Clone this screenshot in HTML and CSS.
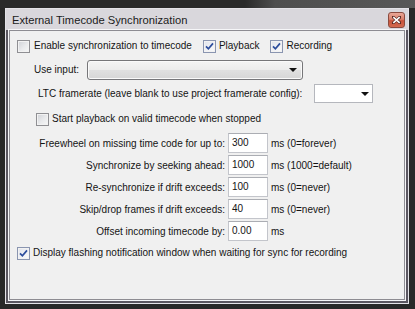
FILE: index.html
```html
<!DOCTYPE html>
<html>
<head>
<meta charset="utf-8">
<link rel="stylesheet" href="styles.css">
</head>
<body>
<div class="window">
  <div class="titlebar">
    <span class="title">External Timecode Synchronization</span>
    <span class="close"><svg width="9" height="8" viewBox="0 0 9 8"><path d="M1 1 L8 7 M8 1 L1 7" stroke="#5a2a22" stroke-width="3" stroke-linecap="square"/><path d="M1.3 1.2 L7.7 6.8 M7.7 1.2 L1.3 6.8" stroke="#fff" stroke-width="1.6"/></svg></span>
  </div>
  <div class="frame">
    <div class="client">
      <div class="row r1">
        <label class="cb"><span class="box"></span>Enable synchronization to timecode</label>
        <label class="cb"><span class="box checked"><svg width="11" height="11" viewBox="0 0 11 11"><path d="M2 5.3 L4.4 7.8 L9 2.4" fill="none" stroke="#2c4d9c" stroke-width="1.7"/></svg></span>Playback</label>
        <label class="cb"><span class="box checked"><svg width="11" height="11" viewBox="0 0 11 11"><path d="M2 5.3 L4.4 7.8 L9 2.4" fill="none" stroke="#2c4d9c" stroke-width="1.7"/></svg></span>Recording</label>
      </div>
      <div class="row r2">
        <span class="lbl">Use input:</span>
        <div class="combo"><span class="arrow"></span></div>
      </div>
      <div class="row r3">
        <span class="lbl">LTC framerate (leave blank to use project framerate config):</span>
        <div class="combo edit"><span class="arrow"></span></div>
      </div>
      <div class="row r4">
        <label class="cb"><span class="box"></span>Start playback on valid timecode when stopped</label>
      </div>
      <div class="grid">
        <span class="glbl">Freewheel on missing time code for up to:</span>
        <span class="field">300</span>
        <span class="unit">ms (0=forever)</span>
        <span class="glbl">Synchronize by seeking ahead:</span>
        <span class="field">1000</span>
        <span class="unit">ms (1000=default)</span>
        <span class="glbl">Re-synchronize if drift exceeds:</span>
        <span class="field">100</span>
        <span class="unit">ms (0=never)</span>
        <span class="glbl">Skip/drop frames if drift exceeds:</span>
        <span class="field">40</span>
        <span class="unit">ms (0=never)</span>
        <span class="glbl">Offset incoming timecode by:</span>
        <span class="field">0.00</span>
        <span class="unit">ms</span>
      </div>
      <div class="row r10">
        <label class="cb"><span class="box checked"><svg width="11" height="11" viewBox="0 0 11 11"><path d="M2 5.3 L4.4 7.8 L9 2.4" fill="none" stroke="#2c4d9c" stroke-width="1.7"/></svg></span>Display flashing notification window when waiting for sync for recording</label>
      </div>
    </div>
  </div>
</div>
</body>
</html>
```
FILE: styles.css
```css
html, body {
  margin: 0;
  padding: 0;
}
body {
  width: 415px;
  height: 309px;
  overflow: hidden;
  background-color: #282828;
  background-image: linear-gradient(to right, #2a2a2a 0, #2a2a2a 245px, #4e4e4e 275px, #585858 100%);
  background-size: 100% 8px;
  background-repeat: no-repeat;
  font-family: "Liberation Sans", Arial, sans-serif;
  font-size: 10px;
  color: #141414;
}
.window {
  margin: 8px 0 0 5px;
  width: 404px;
  height: 296px;
  box-sizing: border-box;
  border: 1px solid #e4e3e8;
  background: #d9d7dc;
  display: flex;
  flex-direction: column;
}
.titlebar {
  height: 21px;
  display: flex;
  align-items: center;
  padding: 0 3px 0 6px;
  flex: none;
}
.title {
  font-size: 11.2px;
  color: #1b1b1b;
}
.close {
  margin-left: auto;
  width: 15px;
  height: 14px;
  margin-top: 1px;
  border: 1px solid #8b4a3e;
  border-radius: 3px;
  background: linear-gradient(#e9a797 0%, #d9806c 45%, #c9533b 55%, #d36a4f 100%);
  display: flex;
  align-items: center;
  justify-content: center;
}
.frame {
  flex: 1;
  background: #5a5660;
  padding: 0 3px 3px 3px;
  display: flex;
}
.client {
  flex: 1;
  border: 1px solid #8d8c92;
  box-shadow: 0 0 0 1px #f6f6f8;
  background: #f0f0f0;
}
.row {
  display: flex;
  align-items: center;
  line-height: 14px;
}
.cb {
  display: flex;
  align-items: center;
  gap: 3px;
  white-space: nowrap;
}
.box {
  width: 13px;
  height: 13px;
  box-sizing: border-box;
  border: 1px solid #8f8f93;
  background: linear-gradient(135deg, #cfd1d6 0%, #e9eaec 55%, #f7f7f7 100%);
  box-shadow: inset 0 0 0 1px #f2f2f2;
  display: flex;
  align-items: center;
  justify-content: center;
  flex: none;
}
.box.checked {
  border-color: #8a95b0;
  background: linear-gradient(135deg, #dfe3ec 0%, #f1f2f6 60%, #fafafa 100%);
}
.r1 {
  margin-top: 8px;
  height: 14px;
  padding-left: 7px;
  gap: 11px;
}
.r1 .cb:first-child {
  gap: 4px;
}
.r2 {
  margin-top: 7px;
  height: 20px;
  padding-left: 24px;
  padding-right: 101px;
}
.r3 {
  margin-top: 4px;
  height: 19px;
  padding-left: 28px;
  padding-right: 31px;
}
.combo {
  margin-left: auto;
  box-sizing: border-box;
  height: 20px;
  width: 216px;
  border: 1px solid #767679;
  border-radius: 3px;
  background: linear-gradient(#f4f4f4 0%, #ececec 48%, #e0e0e0 52%, #d6d6d6 100%);
  box-shadow: inset 0 0 0 1px #fafafa;
  display: flex;
  align-items: center;
  justify-content: flex-end;
  padding-right: 5px;
}
.combo.edit {
  width: 59px;
  height: 19px;
  border: 1px solid #b5b7bd;
  border-radius: 0;
  background: #ffffff;
  box-shadow: none;
  padding-right: 3px;
}
.arrow {
  width: 0;
  height: 0;
  border-left: 4px solid transparent;
  border-right: 4px solid transparent;
  border-top: 4px solid #111;
}
.r4 {
  margin-top: 9px;
  height: 14px;
  padding-left: 26px;
}
.grid {
  margin-top: 7px;
  display: grid;
  grid-template-columns: 215px 40px auto;
  grid-auto-rows: 20px;
  column-gap: 3px;
  row-gap: 2px;
  align-items: center;
}
.glbl {
  text-align: right;
  white-space: nowrap;
}
.field {
  height: 20px;
  box-sizing: border-box;
  border: 1px solid #c3c5cb;
  border-top-color: #abadb3;
  background: #fff;
  padding-left: 3px;
  line-height: 18px;
}
.unit {
  white-space: nowrap;
}
.r10 {
  margin-top: 5px;
  height: 14px;
  padding-left: 7px;
}
```
